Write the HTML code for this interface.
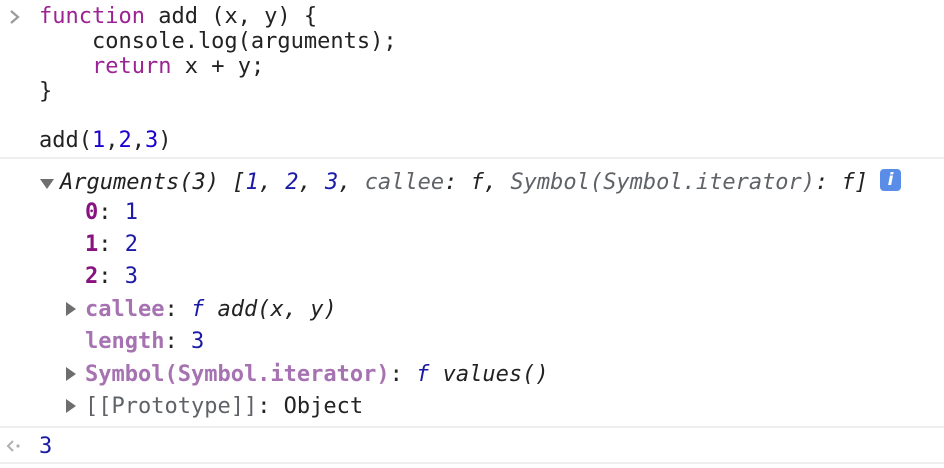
<!DOCTYPE html>
<html><head><style>
body{margin:0;width:944px;height:468px;background:#fff;overflow:hidden;font-family:"DejaVu Sans Mono","Liberation Mono",monospace;font-size:22px;color:#222}
.l{position:absolute;white-space:pre;line-height:25px;height:25px}
.kw{color:#9b2393}.n{color:#1c00cf}.nn{color:#1a1aa6}
.i{font-style:italic}
.g{color:#5f6368}
.k{color:#881280;font-weight:bold}
.kl{color:#a672b1;font-weight:bold}
.sep{position:absolute;left:0;width:944px;height:2px;background:#eeeeee}
.tri{position:absolute;width:0;height:0}
.down{border-left:7px solid transparent;border-right:7px solid transparent;border-top:10px solid #6e6e6e}
.right{border-top:7px solid transparent;border-bottom:7px solid transparent;border-left:10px solid #6e6e6e}
</style></head><body>
<svg style="position:absolute;left:9px;top:9px" width="12" height="16"><path d="M2 2 L9 8 L2 14" stroke="#9a9a9a" stroke-width="2.2" fill="none"/></svg>
<div class="l" style="left:39px;top:4px"><span class="kw">function</span> add (x, y) {</div>
<div class="l" style="left:39px;top:29px">    console.log(arguments);</div>
<div class="l" style="left:39px;top:54px">    <span class="kw">return</span> x + y;</div>
<div class="l" style="left:39px;top:79px">}</div>
<div class="l" style="left:39px;top:128px">add(<span class="n">1</span>,<span class="n">2</span>,<span class="n">3</span>)</div>
<div class="sep" style="top:157px"></div>
<div class="tri down" style="left:40px;top:179px"></div>
<div class="l i" style="left:60px;top:170px">Arguments(3) [<span class="nn">1</span>, <span class="nn">2</span>, <span class="nn">3</span>, <span class="g">callee</span>: f, <span class="g">Symbol(Symbol.iterator)</span>: f]</div>
<div style="position:absolute;left:880px;top:169px;width:21px;height:22px;background:#5a8de8;border-radius:4px;color:#fff;font:italic bold 17px 'DejaVu Sans',sans-serif;text-align:center;line-height:22px">i</div>
<div class="l" style="left:85px;top:200px"><span class="k">0</span>: <span class="nn">1</span></div>
<div class="l" style="left:85px;top:232px"><span class="k">1</span>: <span class="nn">2</span></div>
<div class="l" style="left:85px;top:264px"><span class="k">2</span>: <span class="nn">3</span></div>
<div class="tri right" style="left:66px;top:302px"></div>
<div class="l" style="left:85px;top:297px"><span class="kl">callee</span>: <span class="i"><span class="nn">f</span> add(x, y)</span></div>
<div class="l" style="left:85px;top:329px"><span class="kl">length</span>: <span class="nn">3</span></div>
<div class="tri right" style="left:66px;top:367px"></div>
<div class="l" style="left:85px;top:362px"><span class="kl">Symbol(Symbol.iterator)</span>: <span class="i"><span class="nn">f</span> values()</span></div>
<div class="tri right" style="left:66px;top:399px"></div>
<div class="l" style="left:85px;top:394px"><span class="g">[[Prototype]]</span>: Object</div>
<div class="sep" style="top:426px"></div>
<svg style="position:absolute;left:6px;top:439px" width="16" height="14"><path d="M7 2 L2 7 L7 12" stroke="#b0b0b0" stroke-width="2" fill="none"/><circle cx="12" cy="7" r="1.6" fill="#b0b0b0"/></svg>
<div class="l nn" style="left:39px;top:434px">3</div>
<div class="sep" style="top:462px"></div>
</body></html>
